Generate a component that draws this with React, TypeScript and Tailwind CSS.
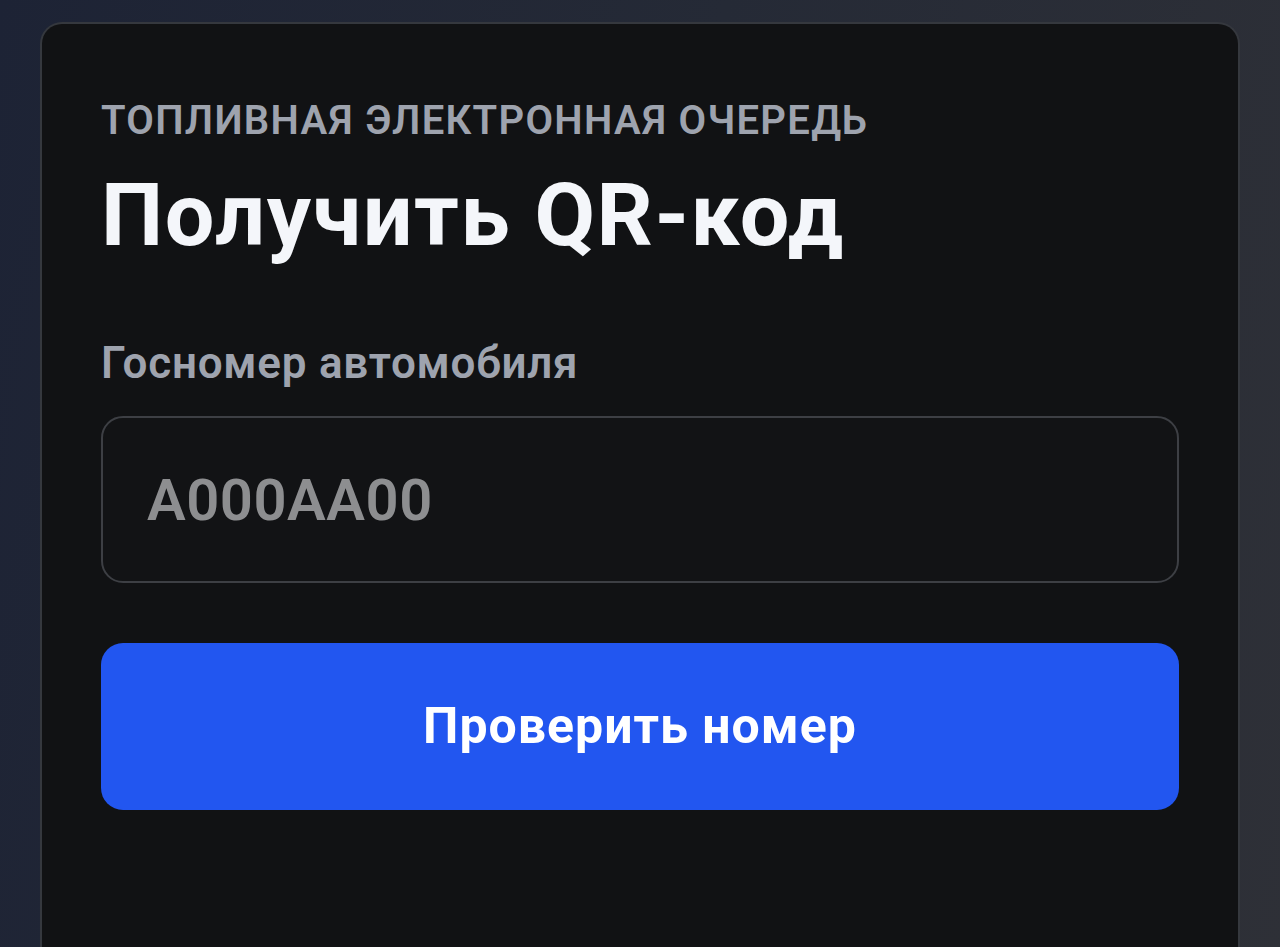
import React from "react";

export default function App() {
  return (
    <div
      className="min-h-[947px] w-full overflow-hidden bg-[linear-gradient(100deg,#1d2335_0%,#252a36_50%,#2e3037_100%)] px-[40px] pt-[22px]"
      style={{ fontFamily: "Roboto, 'Noto Sans', sans-serif" }}
    >
      <div className="h-[960px] rounded-t-[22px] border-2 border-b-0 border-[#35383e] bg-[#111214] px-[59px] pt-[73px]">
        <div className="text-[40px] font-semibold leading-[48px] tracking-[1.3px] text-[#9ea3ae]">
          ТОПЛИВНАЯ ЭЛЕКТРОННАЯ ОЧЕРЕДЬ
        </div>
        <h1 className="mt-[20px] text-[88px] font-bold leading-[100px] tracking-[1.5px] text-[#f4f6fa]">
          Получить QR-код
        </h1>
        <div className="mt-[72px] text-[44px] font-semibold leading-[52px] tracking-[0.75px] text-[#9ea3ae]">
          Госномер автомобиля
        </div>
        <div className="mt-[27px] flex h-[167px] items-center rounded-[22px] border-2 border-[#3d3f44] bg-[#121315] px-[44px]">
          <span className="text-[58px] font-semibold leading-none tracking-[0.5px] text-[#8d8e90]">A000AA00</span>
        </div>
        <button className="mt-[60px] flex h-[167px] w-full items-center justify-center rounded-[22px] bg-[#2256f0] text-[50px] font-bold tracking-[1px] text-white">
          Проверить номер
        </button>
      </div>
    </div>
  );
}
